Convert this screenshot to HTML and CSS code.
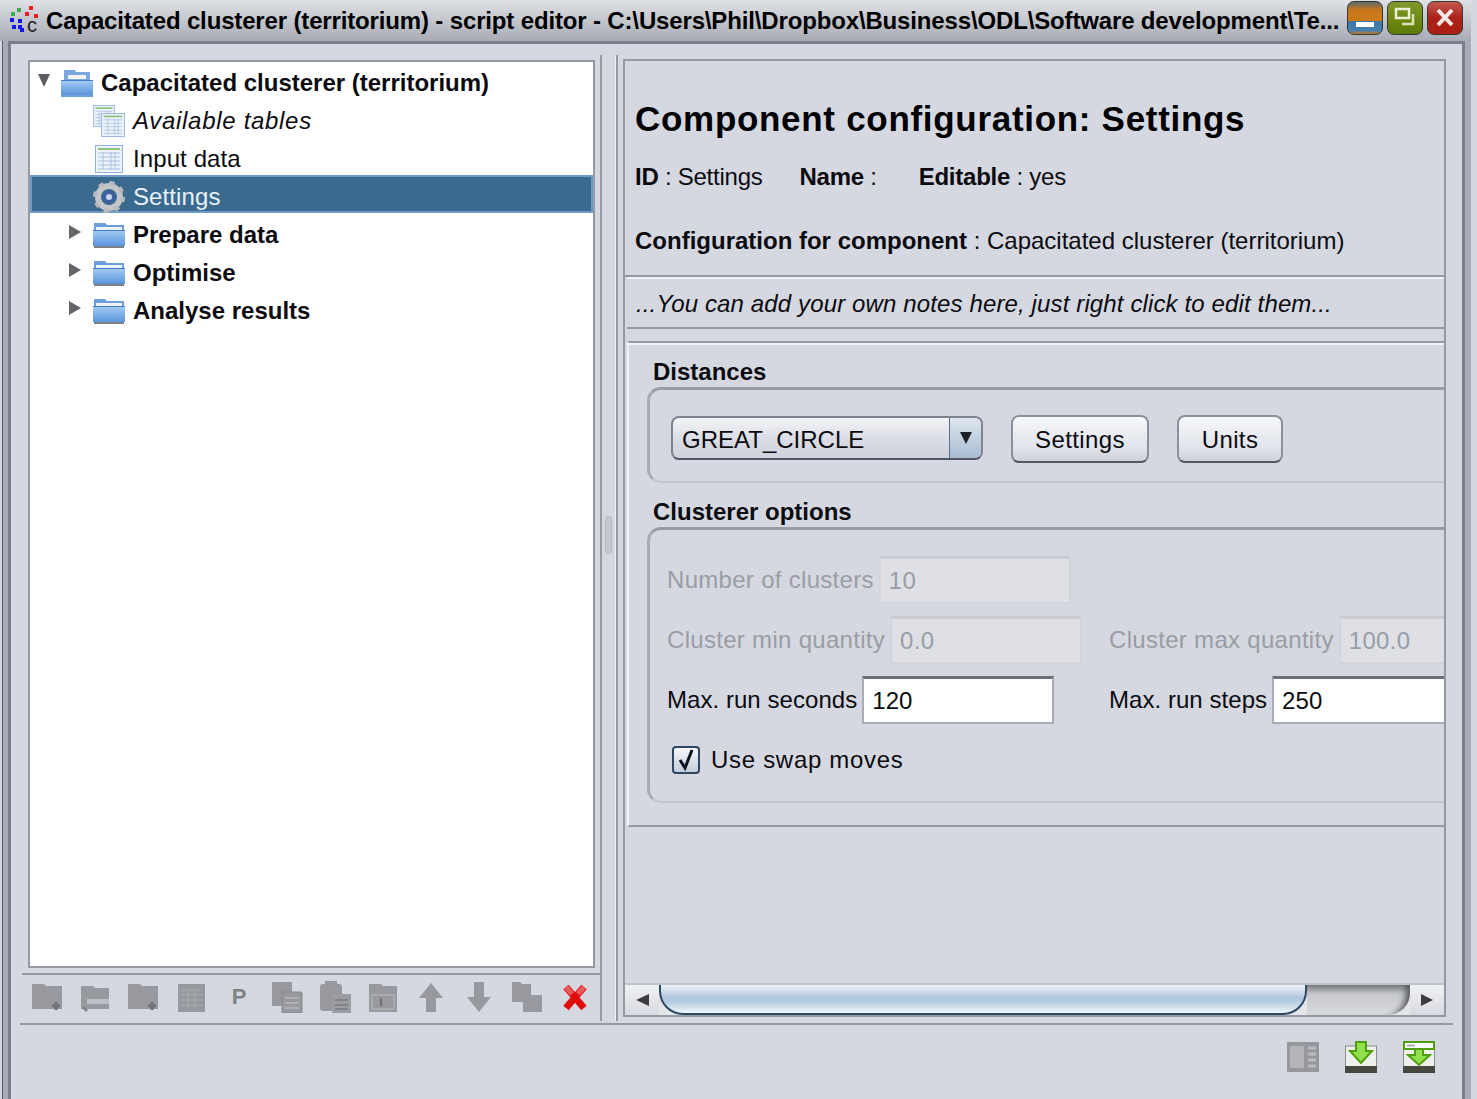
FILE: index.html
```html
<!DOCTYPE html>
<html lang="en">
<head>
  <meta charset="UTF-8">
  <title>Capacitated clusterer (territorium) - script editor</title>
  <link rel="stylesheet" href="styles.css">
</head>
<body>

  <svg class="defs" width="0" height="0">
    <defs>
      <linearGradient id="folderBlue" x1="0" y1="0" x2="0" y2="1">
        <stop offset="0" stop-color="#a9cdf2"/>
        <stop offset="0.5" stop-color="#7fb0ea"/>
        <stop offset="1" stop-color="#5c94dc"/>
      </linearGradient>
      <symbol id="folder" viewBox="0 0 32 28">
        <path d="M1 2h11l2 2h17v6H1z" fill="#6d9fdc"/>
        <rect x="3" y="6" width="26" height="5" fill="#eef3fa"/>
        <rect x="0" y="9" width="32" height="16" fill="url(#folderBlue)"/>
        <rect x="0" y="9" width="32" height="1" fill="#3f7ccb"/>
        <rect x="1" y="25" width="30" height="2" fill="#7d8087"/>
      </symbol>
      <symbol id="folderOpen" viewBox="0 0 32 28">
        <path d="M3 1h11l1 2h14v9H3z" fill="#7aa8de"/>
        <rect x="7" y="6" width="18" height="4" fill="#f0f3f8"/>
        <rect x="0" y="11" width="32" height="15" fill="url(#folderBlue)"/>
        <rect x="0" y="11" width="32" height="1" fill="#3f7ccb"/>
        <rect x="0" y="26" width="32" height="2" fill="#6d9fdc"/>
      </symbol>
      <symbol id="table" viewBox="0 0 28 28">
        <rect x="0.5" y="0.5" width="27" height="27" fill="#eef3fb" stroke="#8fb2da"/>
        <rect x="3" y="3" width="22" height="2" fill="#8cc27c"/>
        <path d="M3 8h22M3 12h22M3 16h22M3 20h22M3 24h22M8 7v18M16 7v18M20 7v18" stroke="#a9c3e2" fill="none"/>
      </symbol>
    </defs>
  </svg>

  <div class="window">
    <header class="titlebar">
      <svg class="app-logo" width="32" height="34" viewBox="0 0 32 34">
        <g fill="#1414f0">
          <rect x="1" y="14" width="4" height="4"/><rect x="9" y="15" width="4" height="4"/>
          <rect x="3" y="21" width="4" height="4"/><rect x="9" y="21" width="4" height="4"/>
          <rect x="11" y="24" width="4" height="4"/>
        </g>
        <g fill="#3fae4a"><rect x="2" y="8" width="4" height="4"/><rect x="8" y="4" width="4" height="4"/></g>
        <g fill="#ee1c1c"><rect x="20" y="2" width="4" height="4"/><rect x="16" y="8" width="4" height="4"/><rect x="25" y="10" width="4" height="4"/></g>
        <text x="18" y="28" class="logo-c">c</text>
      </svg>
      <div class="title-text">Capacitated clusterer (territorium) - script editor - C:\Users\Phil\Dropbox\Business\ODL\Software development\Te...</div>
      <div class="win-buttons">
        <div class="win-btn win-min"><span class="min-mark"></span></div>
        <div class="win-btn win-max">
          <svg width="24" height="24" viewBox="0 0 24 24" fill="none" stroke="#eef0d8" stroke-width="2.5"><path d="M3 3h13v9H3z"/><path d="M20 8v10H9" stroke="#dfe3b8"/></svg>
        </div>
        <div class="win-btn win-close">
          <svg width="24" height="24" viewBox="0 0 24 24" stroke="#f6e8e6" stroke-width="4"><path d="M5 4l14 15M19 4L5 19"/></svg>
        </div>
      </div>
    </header>

    <div class="client">
      <div class="split">
        <div class="left-pane">
          <div class="tree">
            <div class="row row-root bold">
              <span class="arrow-down"></span>
              <svg class="tree-icon" width="32" height="28"><use href="#folderOpen"/></svg>
              <span class="row-label">Capacitated clusterer (territorium)</span>
            </div>
            <div class="row row-child">
              <svg class="tree-icon" width="32" height="32" viewBox="0 0 32 32">
                <use href="#table" width="22" height="22" x="0" y="0"/>
                <use href="#table" width="24" height="24" x="8" y="8"/>
              </svg>
              <span class="row-label italic wide">Available tables</span>
            </div>
            <div class="row row-child">
              <svg class="tree-icon" width="32" height="28" viewBox="0 0 32 28"><use href="#table" x="2" width="28" height="28"/></svg>
              <span class="row-label">Input data</span>
            </div>
            <div class="row row-child row-selected">
              <svg class="tree-icon" width="32" height="32" viewBox="0 0 32 32">
                <circle cx="16" cy="16" r="11" fill="none" stroke="#c4c6c9" stroke-width="6"/>
                <circle cx="16" cy="16" r="14" fill="none" stroke="#b9bbbe" stroke-width="4" stroke-dasharray="5 6"/>
                <circle cx="16" cy="16" r="6.5" fill="#3f5f9f"/>
                <circle cx="16" cy="16" r="3" fill="#c9d4ea"/>
              </svg>
              <span class="row-label">Settings</span>
            </div>
            <div class="row row-folder bold">
              <span class="arrow-right"></span>
              <svg class="tree-icon" width="32" height="28"><use href="#folder"/></svg>
              <span class="row-label">Prepare data</span>
            </div>
            <div class="row row-folder bold">
              <span class="arrow-right"></span>
              <svg class="tree-icon" width="32" height="28"><use href="#folder"/></svg>
              <span class="row-label">Optimise</span>
            </div>
            <div class="row row-folder bold">
              <span class="arrow-right"></span>
              <svg class="tree-icon" width="32" height="28"><use href="#folder"/></svg>
              <span class="row-label">Analyse results</span>
            </div>
          </div>

          <div class="tree-toolbar">
            <svg width="32" height="32" viewBox="0 0 32 32"><path class="ic" d="M1 3h12l2 2h16v23H1z"/><path d="M21 25h8M25 21v8" stroke="#6f7176" stroke-width="3"/></svg>
            <svg width="32" height="32" viewBox="0 0 32 32"><path class="ic" d="M2 5h12l2 2h14v21H2z"/><path d="M8 18h22v5H8z" fill="#d5d8e0" opacity=".6"/><path d="M4 26l4 4" stroke="#85878c" stroke-width="3"/></svg>
            <svg width="32" height="32" viewBox="0 0 32 32"><path class="ic" d="M1 3h12l2 2h16v23H1z"/><path d="M21 25h8M25 21v8" stroke="#6f7176" stroke-width="3"/></svg>
            <svg width="32" height="32" viewBox="0 0 32 32"><rect class="ic" x="3" y="3" width="27" height="28"/><path d="M6 9h21M6 14h21M6 19h21M6 24h21M13 9v18M20 9v18" stroke="#a4a6ab" stroke-width="1.5"/></svg>
            <span class="tool-p">P</span>
            <svg width="32" height="32" viewBox="0 0 32 32"><rect class="ic" x="1" y="1" width="20" height="24" rx="1"/><rect class="ic ic-edge" x="11" y="11" width="20" height="21" rx="1"/><path d="M14 17h14M14 22h14M14 27h14" stroke="#aeb0b4" stroke-width="2"/></svg>
            <svg width="32" height="32" viewBox="0 0 32 32"><rect class="ic" x="1" y="3" width="22" height="27" rx="3"/><rect class="ic" x="6" y="0" width="12" height="5"/><rect x="13" y="13" width="19" height="19" fill="#9b9da2"/><path d="M16 19h13M16 24h13M16 28h13" stroke="#7f8186" stroke-width="2"/></svg>
            <svg width="32" height="32" viewBox="0 0 32 32"><path class="ic" d="M2 3h12l2 2h14v26H2z"/><rect x="5" y="14" width="22" height="14" fill="none" stroke="#a9abaf" stroke-width="2"/><path d="M14 17v8" stroke="#6f7176" stroke-width="2"/></svg>
            <svg width="32" height="32" viewBox="0 0 32 32"><path class="ic" d="M16 2l12 15h-7v14h-10V17H4z"/></svg>
            <svg width="32" height="32" viewBox="0 0 32 32"><path class="ic" d="M16 31L4 16h7V1h10v15h7z"/></svg>
            <svg width="32" height="32" viewBox="0 0 32 32"><path class="ic" d="M1 1h8l2 2h9v18H1z"/><path class="ic" d="M12 12h6l2 2h11v17H12z"/></svg>
            <svg width="32" height="32" viewBox="0 0 32 32"><path d="M7 6l18 21M25 6L7 27" stroke="#e00c0c" stroke-width="7"/><path d="M7 6l6 7M25 6l-6 7" stroke="#e85c5c" stroke-width="5"/></svg>
          </div>
        </div>

        <div class="splitter"><span class="grip"></span></div>

        <div class="right-pane">
          <div class="right-frame">
            <section class="head-panel">
              <h1>Component configuration: Settings</h1>
              <p class="meta-row">
                <span><b>ID</b> : Settings</span>
                <span><b>Name</b> :</span>
                <span><b>Editable</b> : yes</span>
              </p>
              <p class="config-row"><b>Configuration for component</b> : Capacitated clusterer (territorium)</p>
            </section>

            <section class="notes">...You can add your own notes here, just right click to edit them...</section>

            <section class="form-panel">
              <h3 class="group-title">Distances</h3>
              <div class="group group-distances">
                <div class="combo">
                  <span class="combo-value">GREAT_CIRCLE</span>
                  <span class="combo-btn"><span class="combo-arrow"></span></span>
                </div>
                <button class="btn btn-settings">Settings</button>
                <button class="btn btn-units">Units</button>
              </div>

              <h3 class="group-title">Clusterer options</h3>
              <div class="group group-options">
                <div class="field-row">
                  <div class="field disabled">
                    <label>Number of clusters</label>
                    <span class="input">10</span>
                  </div>
                </div>
                <div class="field-row">
                  <div class="field disabled">
                    <label>Cluster min quantity</label>
                    <span class="input">0.0</span>
                  </div>
                  <div class="field disabled">
                    <label>Cluster max quantity</label>
                    <span class="input">100.0</span>
                  </div>
                </div>
                <div class="field-row">
                  <div class="field">
                    <label>Max. run seconds</label>
                    <span class="input">120</span>
                  </div>
                  <div class="field">
                    <label>Max. run steps</label>
                    <span class="input">250</span>
                  </div>
                </div>
                <div class="check-row">
                  <span class="checkbox">
                    <svg width="22" height="24" viewBox="0 0 22 24" fill="none" stroke="#0c1420" stroke-width="3"><path d="M5 12l5 8L17 2"/></svg>
                  </span>
                  <span class="wide">Use swap moves</span>
                </div>
              </div>
            </section>

            <div class="hscroll">
              <span class="scroll-btn"><span class="arrow-left"></span></span>
              <div class="scroll-track">
                <span class="scroll-thumb"></span>
                <span class="scroll-rest"></span>
              </div>
              <span class="scroll-btn"><span class="arrow-right small"></span></span>
            </div>
          </div>
        </div>
      </div>

      <div class="footer-bar">
        <svg width="32" height="32" viewBox="0 0 32 32"><rect x="0" y="1" width="32" height="30" fill="#96989d"/><rect x="3" y="5" width="14" height="22" fill="#b3b5b9"/><path d="M21 7h8M21 13h8M21 19h8M21 25h8" stroke="#b9bbbf" stroke-width="3"/></svg>
        <svg width="32" height="32" viewBox="0 0 32 32">
          <rect x="0.5" y="5" width="31" height="23" fill="#eef0ec" stroke="#8a8c8e"/>
          <rect x="0" y="25" width="32" height="7" fill="#45483f"/>
          <path d="M11 1h10v9h6L16 22 5 10h6z" fill="#8fe04a" stroke="#4f9e12" stroke-width="2"/>
        </svg>
        <svg width="32" height="32" viewBox="0 0 32 32">
          <rect x="0.5" y="5" width="31" height="23" fill="#eef0ec" stroke="#8a8c8e"/>
          <rect x="0" y="25" width="32" height="7" fill="#45483f"/>
          <rect x="1" y="1" width="30" height="7" fill="#fff" stroke="#4f9e12" stroke-width="2"/>
          <rect x="4" y="3.500" width="8" height="2" fill="#a8aaa8"/>
          <path d="M12 8h8v6h7L16 24 5 14h7z" fill="#8fe04a" stroke="#4f9e12" stroke-width="2"/>
        </svg>
      </div>
    </div>
  </div>

</body>
</html>
```

FILE: styles.css
```css
* {
  box-sizing: border-box;
}

html, body {
  margin: 0;
  height: 100%;
  overflow: hidden;
}

body {
  font-family: "Liberation Sans", Arial, sans-serif;
  font-size: 24px;
  color: #0b0b10;
  background: #d5d8e0;
}

.defs {
  position: absolute;
}

.wide {
  letter-spacing: 0.7px;
}

.window {
  width: 1471px;
  height: 1099px;
  display: flex;
  flex-direction: column;
  overflow: hidden;
  background: #a9acb6;
  box-shadow: inset 2px 0 0 #d5d8e0, inset 3px 0 0 #5b5e68;
}

/* title bar */
.titlebar {
  height: 41px;
  width: 1477px;
  display: flex;
  align-items: center;
  padding-left: 9px;
  background: linear-gradient(to bottom, #dfe1e5, #a8abb4);
  flex: none;
}

.app-logo {
  flex: none;
}

.logo-c {
  font-size: 20px;
  font-family: "Liberation Sans", sans-serif;
  fill: #222;
}

.title-text {
  margin-left: 5px;
  width: 1296px;
  font-size: 24px;
  font-weight: bold;
  letter-spacing: -0.15px;
  white-space: nowrap;
  overflow: hidden;
  color: #000;
}

.win-buttons {
  display: flex;
  gap: 4px;
  margin-left: 5px;
  margin-top: -5px;
}

.win-btn {
  width: 36px;
  height: 34px;
  border-radius: 7px;
  border: 1px solid #2f3a36;
  display: flex;
  align-items: center;
  justify-content: center;
}

.win-min {
  background: linear-gradient(to bottom, #5b6d6a 0, #c8761c 25%, #cd7a18 58%, #3f75a8 60%, #4a7fb0 90%, #c8761c 100%);
}

.min-mark {
  display: block;
  width: 18px;
  height: 5px;
  margin-top: 12px;
  background: #fff;
}

.win-max {
  background: linear-gradient(to bottom, #7f9a2c, #6f8a12 50%, #5d7a08);
}

.win-close {
  background: linear-gradient(to bottom, #c35a52, #ac2218 50%, #ad1e14);
}

/* window content */
.client {
  flex: 1;
  margin: 0 6px 0 8px;
  border: 3px solid #7b7f8b;
  border-bottom: 0;
  background: #d5d8e0;
  padding: 11px 0 0 9px;
}

.split {
  height: 966px;
  display: flex;
}

.left-pane {
  width: 582px;
  border-right: 2px solid #9599a3;
  padding-left: 8px;
  padding-top: 5px;
  display: flex;
  flex-direction: column;
}

.tree {
  width: 567px;
  height: 908px;
  background: #fff;
  border: 2px solid #9599a3;
  padding-top: 2px;
  flex: none;
}

.row {
  height: 38px;
  display: flex;
  align-items: center;
  font-size: 24px;
  letter-spacing: 0.1px;
}

.bold {
  font-weight: bold;
  letter-spacing: 0;
}

.italic {
  font-style: italic;
}

.row-root {
  padding-left: 8px;
}

.row-child {
  padding-left: 63px;
}

.row-folder {
  padding-left: 39px;
}

.row-selected {
  margin-top: -3px;
  margin-bottom: 3px;
  padding-top: 5px;
  background: #3a6a8e;
  border: 2px solid #6f9cc6;
  padding-left: 61px;
  color: #e8f0f8;
}

.tree-icon {
  flex: none;
  margin-right: 8px;
}

.arrow-down {
  width: 0;
  height: 0;
  margin-right: 11px;
  margin-top: -6px;
  border-left: 6px solid transparent;
  border-right: 6px solid transparent;
  border-top: 13px solid #5c5e62;
}

.arrow-right {
  width: 0;
  height: 0;
  margin-right: 12px;
  margin-top: -6px;
  border-top: 7px solid transparent;
  border-bottom: 7px solid transparent;
  border-left: 12px solid #636568;
}

.arrow-right.small {
  margin: 0;
  border-left-color: #3b3d42;
  border-top-width: 6px;
  border-bottom-width: 6px;
}

.arrow-left {
  width: 0;
  height: 0;
  border-top: 6px solid transparent;
  border-bottom: 6px solid transparent;
  border-right: 13px solid #3b3d42;
}

.tree-toolbar {
  margin-left: -6px;
  margin-top: 5px;
  padding: 6px 0 0 9px;
  border-top: 2px solid #9599a3;
  display: flex;
  gap: 16px;
}

.ic {
  fill: #97999e;
}

.ic-edge {
  stroke: #85878c;
}

.tool-p {
  width: 32px;
  height: 32px;
  display: block;
  text-align: center;
  font-size: 22px;
  line-height: 32px;
  font-weight: bold;
  color: #808286;
}

.splitter {
  width: 13px;
  display: flex;
  align-items: center;
  justify-content: center;
  flex: none;
}

.grip {
  display: block;
  width: 7px;
  height: 38px;
  margin-top: -7px;
  border: 1px solid #b4b7c0;
  border-radius: 4px;
  background: #c6c9d2;
}

.right-pane {
  flex: 1;
  border-left: 1px solid #f1f2f5;
  box-shadow: inset 2px 0 0 #9599a3;
  padding: 4px 0;
  min-width: 0;
}

.right-frame {
  margin-left: 7px;
  width: 823px;
  height: 958px;
  border: 2px solid #9599a3;
  display: flex;
  flex-direction: column;
  overflow: hidden;
}

.head-panel {
  height: 216px;
  padding: 36px 0 0 10px;
  border-bottom: 2px solid #9599a3;
  flex: none;
}

h1 {
  margin: 0;
  font-size: 35px;
  line-height: 44px;
  font-weight: bold;
  letter-spacing: 0.7px;
  color: #000;
}

.meta-row {
  margin: 21px 0 0;
  display: flex;
  gap: 37px;
  line-height: 30px;
  letter-spacing: -0.25px;
}

.meta-row span:last-child {
  margin-left: 5px;
}

.config-row {
  margin: 34px 0 0;
  line-height: 30px;
  letter-spacing: 0;
}

.notes {
  height: 52px;
  margin-left: 2px;
  padding-left: 9px;
  border-top: 2px solid #f1f2f5;
  border-bottom: 2px solid #9599a3;
  line-height: 50px;
  font-style: italic;
  letter-spacing: 0.13px;
  flex: none;
}

.form-panel {
  margin-top: 12px;
  height: 486px;
  margin-left: 2px;
  padding: 14px 0 0 24px;
  border-top: 2px solid #9599a3;
  border-bottom: 2px solid #9599a3;
  border-left: 2px solid #f1f2f5;
  box-shadow: inset 0 2px 0 #f1f2f5;
  flex: none;
}

.group-title {
  margin: 0;
  font-size: 24px;
  line-height: 30px;
  font-weight: bold;
  height: 30px;
}

.group {
  width: 850px;
  border-radius: 14px;
  border: 2px solid #c3c6cd;
  border-top: 3px solid #999ca6;
  border-left: 3px solid #a8abb3;
  margin-left: -6px;
}

.group-distances {
  height: 96px;
  margin-bottom: 14px;
  padding: 25px 0 0 21px;
  display: flex;
  align-items: flex-start;
}

.combo {
  width: 312px;
  height: 44px;
  margin-top: 1px;
  border: 2px solid #7f8390;
  border-bottom-color: #505664;
  border-radius: 8px;
  display: flex;
  overflow: hidden;
  background: linear-gradient(to bottom, #f4f5f8, #d9dce4 55%, #cfd3dc);
}

.combo-value {
  flex: 1;
  padding-left: 9px;
  line-height: 44px;
}

.combo-btn {
  width: 32px;
  display: flex;
  align-items: flex-start;
  justify-content: center;
  padding-top: 14px;
  border-left: 1px solid #5b6f88;
  background: linear-gradient(to bottom, #dfe5ed, #a7bcd2);
}

.combo-arrow {
  border-left: 6px solid transparent;
  border-right: 6px solid transparent;
  border-top: 12px solid #1c1f26;
}

.btn {
  height: 48px;
  padding: 2px 0 0;
  font-family: inherit;
  font-size: 24px;
  letter-spacing: 0.4px;
  color: #0b0b10;
  border: 2px solid #8c909a;
  border-bottom-color: #54585f;
  border-radius: 8px;
  background: linear-gradient(to bottom, #f7f8fa, #e0e3ea 70%, #ced1da);
}

.btn-settings {
  width: 138px;
  margin-left: 28px;
}

.btn-units {
  width: 106px;
  margin-left: 28px;
}

.group-options {
  height: 276px;
  padding: 26px 0 0 17px;
}

.field-row {
  display: flex;
  height: 48px;
  margin-bottom: 12px;
}

.field {
  width: 442px;
  display: flex;
  align-items: center;
  letter-spacing: 0.05px;
  flex: none;
}

.field label {
  margin-right: 5px;
  white-space: nowrap;
}

.input {
  display: block;
  width: 192px;
  height: 48px;
  padding-left: 8px;
  line-height: 43px;
  background: #fff;
  border: 2px solid #a9acb4;
  border-top: 3px solid #6e7078;
  flex: none;
}

.field.disabled {
  color: #9a9da5;
  letter-spacing: 0.3px;
}

.field.disabled .input {
  background: #dee0e5;
  border: 2px solid #d3d5da;
  border-top: 3px solid #c9cbd1;
}

.check-row {
  display: flex;
  align-items: center;
  gap: 11px;
  padding-left: 5px;
  margin-top: 21px;
  height: 30px;
}

.checkbox {
  width: 28px;
  height: 28px;
  border: 2px solid #2e4660;
  border-radius: 4px;
  background: linear-gradient(to bottom, #f6f7fa, #c4cfdd);
  display: flex;
  align-items: center;
  justify-content: center;
}

/* horizontal scrollbar */
.hscroll {
  margin-top: auto;
  height: 32px;
  display: flex;
  flex: none;
  border-top: 2px solid #bfc2ca;
  overflow: hidden;
}

.scroll-btn {
  width: 34px;
  display: flex;
  align-items: center;
  justify-content: center;
  background: linear-gradient(to bottom, #f0f1f4, #d8dae0);
  flex: none;
}

.scroll-track {
  flex: 1;
  display: flex;
  background: #e4e5e9;
}

.scroll-thumb {
  display: block;
  width: 648px;
  flex: none;
  height: 100%;
  border: 2px solid #2d4a62;
  border-top: 0;
  border-radius: 0 0 24px 24px;
  background: linear-gradient(to bottom, #eef3f7, #afc6dc 45%, #b7cde2 60%, #eef6fb);
}

.scroll-rest {
  flex: 1;
  border-radius: 0 0 22px 0;
  background: linear-gradient(to bottom, #77797f, #c6c8cd 30%, #dadbdf);
  box-shadow: inset -9px 0 6px -5px #55575c;
}

.footer-bar {
  height: 76px;
  margin-top: 2px;
  width: 1433px;
  border-top: 2px solid #9599a3;
  padding: 16px 18px 0 0;
  display: flex;
  justify-content: flex-end;
  gap: 26px;
}
```
